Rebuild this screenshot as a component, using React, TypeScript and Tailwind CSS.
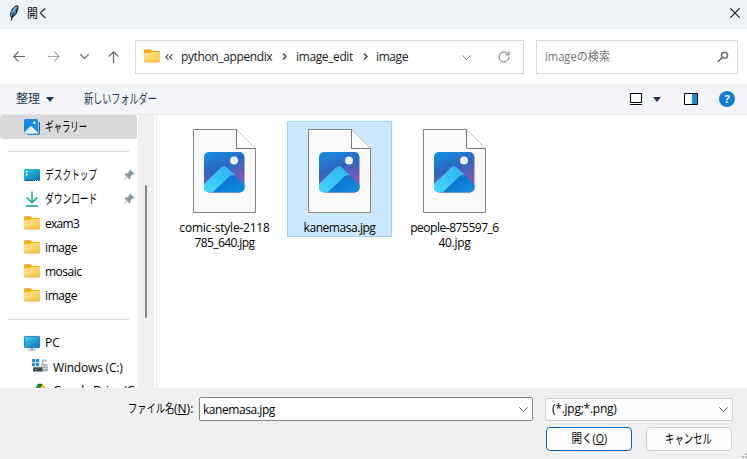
import React, { useId } from "react";

const FONT = "font-['Open_Sans','Noto_Sans_CJK_JP',sans-serif]";

function Folder({ className = "" }: { className?: string }) {
  const id = useId();
  return (
    <svg width="16" height="14" viewBox="0 0 16 14" className={className}>
      <defs>
        <linearGradient id={id} x1="0" y1="0" x2="1" y2="1">
          <stop offset="0" stopColor="#ffe394" />
          <stop offset="1" stopColor="#fcc83f" />
        </linearGradient>
      </defs>
      <path d="M0 1.2Q0 .3.9.3h5.3q.5 0 .9.4L8.500 2H15q1 0 1 1v4H0z" fill="#f2ae10" />
      <path d="M0 4.600Q0 4 .8 4h5.400q.5 0 .9-.4L8 2.900h7.200q.8 0 .8.8v8.400q0 .9-.9.9H.9q-.9 0-.9-.9z" fill={`url(#${id})`} />
      <path d="M.4 12.500q.2.500.6.500h14q.4 0 .6-.5" fill="none" stroke="#dfa11c" strokeWidth=".8" />
    </svg>
  );
}

function Pin() {
  return (
    <svg width="11" height="12" viewBox="0 0 11 12" className="absolute left-[124px] top-[6px]">
      <path d="M6.2.5 10.6 4.8 9.3 5.5 8.7 5.4 6.5 7.6 6.3 9.7 5.5 10.3 3.2 8 .5 10.8 0 10.5 2.6 7.5.5 5.2 1.2 4.4 3.4 4.3 5.7 2.1 5.5 1.2z" fill="#8b97a1" />
    </svg>
  );
}

function Feather() {
  return (
    <svg width="10" height="16" viewBox="0 0 10 16">
      <path d="M8.600.600C5 1 1.600 5 1.400 10.500L2.800 13C6.500 10.500 9.500 6 9 1z" fill="#4b8bc6" stroke="#162230" strokeWidth=".9" />
      <path d="M7.600 1.800C5.300 4 3.500 7 2.900 10" stroke="#a9d3f0" fill="none" />
      <path d="M8.700 1.800 7.200 7.500 3.200 12" stroke="#18222e" fill="none" strokeWidth=".8" />
      <path d="M4.300 7.500 2.300 15.500" stroke="#111" fill="none" />
    </svg>
  );
}

function Gallery() {
  return (
    <svg width="16" height="16" viewBox="0 0 16 16">
      <path d="M14.200 2.500Q16 2.500 16 4v10q0 2-2 2H4q-1.500 0-1.500-1.800z" fill="#0868ae" />
      <rect width="14" height="14.500" rx="1.500" fill="#168bdd" />
      <path d="M14.500 2v12.800H2.500" fill="none" stroke="#d9ebf7" strokeWidth=".7" />
      <path d="M.3 13.600 6.200 7.500q.8-.7 1.600 0l5.900 6.100q-.3.800-1 .8H1.200q-.6 0-.9-.8z" fill="#e7f2fb" />
      <circle cx="10.300" cy="3.700" r="1.300" fill="#fff" />
    </svg>
  );
}

function Desktop() {
  return (
    <svg width="16" height="12" viewBox="0 0 16 12">
      <defs>
        <linearGradient id="desk" x1="0" y1="0" x2="1" y2="1">
          <stop stopColor="#2fd0da" />
          <stop offset="1" stopColor="#086db9" />
        </linearGradient>
      </defs>
      <rect width="16" height="12" rx="1.200" fill="url(#desk)" />
      <path d="M2 2h1.500v1.500H2zM2 5h1.500v1.500H2z" fill="#fff" />
      <path d="M1 11.300h14" stroke="#0b4d90" strokeWidth=".7" />
      <path d="M11 11h1v1h-1zM13 11h1v1h-1z" fill="#bfe6fb" />
    </svg>
  );
}

function Download() {
  return (
    <svg width="14" height="16" viewBox="0 0 14 16" className="ml-px" fill="none" strokeWidth="1.700">
      <defs>
        <linearGradient id="down" gradientUnits="userSpaceOnUse" x1="0" y1="0" x2="0" y2="16">
          <stop stopColor="#34c98a" />
          <stop offset="1" stopColor="#0f9f95" />
        </linearGradient>
      </defs>
      <path d="M7 .5v10.800M1.700 6.300 7 11.500l5.300-5.200M1 15h12" stroke="url(#down)" />
    </svg>
  );
}

function Monitor() {
  return (
    <svg width="16" height="16" viewBox="0 0 16 16">
      <defs>
        <linearGradient id="mon" x1="0" y1="0" x2="1" y2="1">
          <stop stopColor="#42d8e5" />
          <stop offset="1" stopColor="#0b6dbf" />
        </linearGradient>
      </defs>
      <rect x=".4" y="1.400" width="15.200" height="11.200" rx=".8" fill="url(#mon)" stroke="#1a6798" strokeWidth=".8" />
      <path d="M7 13h2v2H7zM4 14.500h8v1H4z" fill="#90a4b2" />
    </svg>
  );
}

function Drive() {
  return (
    <svg width="17" height="14" viewBox="0 0 17 14" className="-mt-[3px]">
      <path d="M0 0h3.200v3.200H0zM4 0h3.200v3.200H4zM0 4h3.200v3.200H0zM4 4h3.200v3.200H4z" fill="#1592e6" />
      <path d="M10.500 6V3q0-2 2-2 1.700 0 2 1.700" fill="none" stroke="#a7b0b8" strokeWidth="1.500" />
      <rect x="9" y="5" width="7" height="7.500" rx="1.500" fill="#a6b1ba" />
      <path d="M9 7h7M9 9.500h7" stroke="#d4dade" />
      <path d="M1.500 8.300H10l.7 4.200H.8z" fill="#3b444b" />
      <path d="M3 10.500h2" stroke="#35e067" strokeWidth="1.200" />
    </svg>
  );
}

function Google() {
  return (
    <svg width="16" height="16" viewBox="0 0 16 16">
      <path d="M6 1.500h3.500L6 12 2 8 5 2.500z" fill="#17903f" />
      <path d="M8.500 1H10q1 0 1.500.8L15 8h-5L7.500 4z" fill="#fbc116" />
      <path d="M5.500 1.500Q6 .8 7 .8h2q1 0 1.500.7L8.500 4.500z" fill="#0c7839" />
      <path d="M4 10h11l-3 4H2z" fill="#3273e8" />
    </svg>
  );
}

function ImageFile() {
  const id = useId();
  return (
    <svg width="63" height="84" viewBox="0 0 63 84">
      <defs>
        <linearGradient id={id + "a"} x1=".25" y1="0" x2=".6" y2="1">
          <stop stopColor="#158cde" />
          <stop offset=".4" stopColor="#2f66bf" />
          <stop offset=".75" stopColor="#7d59b8" />
        </linearGradient>
        <linearGradient id={id + "b"} x1="0" y1="1" x2=".8" y2="0">
          <stop stopColor="#48d8fb" />
          <stop offset="1" stopColor="#2eb4ef" />
        </linearGradient>
        <linearGradient id={id + "c"} x1="0" y1="0" x2="1" y2="1">
          <stop stopColor="#086bc3" />
          <stop offset="1" stopColor="#128ee3" />
        </linearGradient>
        <clipPath id={id + "d"}>
          <rect x="11" y="23" width="40.500" height="40.500" rx="5" />
        </clipPath>
      </defs>
      <path d="M.5.500h43l19 19v64H.5z" fill="#fafafa" stroke="#858585" />
      <path d="M43.500.500v19h19" fill="#fff" stroke="#777" />
      <g clipPath={`url(#${id}d)`}>
        <path d="M11 23h41v41H11z" fill={`url(#${id}a)`} />
        <path d="m17 64 18-16.500q4-3 8 0L52 56v8z" fill={`url(#${id}c)`} />
        <path d="M10 56 27.500 39q3.500-3.300 7 0l7.500 7.300q-3-1-6 1.500L19 64h-9z" fill={`url(#${id}b)`} />
      </g>
      <circle cx="41" cy="31.500" r="4" fill="#edf0f5" />
    </svg>
  );
}

function Chevron({ className = "" }: { className?: string }) {
  return (
    <svg width="9" height="5" viewBox="0 0 9 5" className={className} fill="none" stroke="currentColor">
      <path d="m.4.400 4.100 4L8.600.400" />
    </svg>
  );
}

function Crumb() {
  return (
    <svg width="5" height="7" viewBox="0 0 5 7" fill="none" stroke="#4b4b4b" strokeWidth="1.500">
      <path d="m1 .5 3 3-3 3" />
    </svg>
  );
}

function SideRow({ icon, label, indent = "pl-6", text = "", pinned = false }: {
  icon: React.ReactNode; label: string; indent?: string; text?: string; pinned?: boolean;
}) {
  return (
    <div className={`relative flex h-6 w-[137px] shrink-0 items-center whitespace-nowrap ${indent}`}>
      <span className="flex w-[21px] shrink-0 items-center">{icon}</span>
      <span className={`origin-left ${text}`}>{label}</span>
      {pinned && <Pin />}
    </div>
  );
}

function FileTile({ lines, selected = false }: { lines: { label: string; text: string }[]; selected?: boolean }) {
  return (
    <div className={`flex w-[105px] shrink-0 flex-col items-center border pt-[7px] ${selected ? "h-[116px] border-[#99d1ff] bg-[#cce8ff]" : "h-[132px] border-transparent"}`}>
      <ImageFile />
      <div className="mt-[7px] text-center leading-[15px]">
        {lines.map((l) => (
          <div key={l.label} className={`whitespace-nowrap ${l.text}`}>{l.label}</div>
        ))}
      </div>
    </div>
  );
}

export default function App() {
  return (
    <div className={`flex h-[459px] w-[747px] flex-col overflow-hidden bg-white text-[12px] leading-4 text-[#191919] ${FONT}`}>
      <header className="flex h-[29px] shrink-0 items-center bg-[#eef3f8] pl-[9px] pr-[7px]">
        <div className="-mt-[3px]"><Feather /></div>
        <span className="-mt-[2px] ml-[8px] origin-left scale-x-[0.9] text-black">開く</span>
        <svg width="10" height="10" viewBox="0 0 10 10" className="-mt-[3px] ml-auto" stroke="#181818" strokeWidth="1.100">
          <path d="m.3.300 9.400 9.400M9.700.300.300 9.700" />
        </svg>
      </header>

      <nav className="flex h-[55px] shrink-0 items-center pl-[13px] pr-[9px]">
        <svg width="12" height="11" viewBox="0 0 12 11" fill="none" stroke="#666" strokeWidth="1.200"><path d="M12 5.500H.800M5.500.700.800 5.500l4.700 4.800" /></svg>
        <svg width="12" height="11" viewBox="0 0 12 11" className="ml-[23px]" fill="none" stroke="#a3a3a3" strokeWidth="1.200"><path d="M0 5.500h11.200M6.500.700l4.700 4.800-4.700 4.800" /></svg>
        <Chevron className="ml-[20px] stroke-[1.3] text-[#666]" />
        <svg width="11" height="12" viewBox="0 0 11 12" className="ml-[19px]" fill="none" stroke="#666" strokeWidth="1.200"><path d="M5.500 12V.800M.700 5.500 5.500.800l4.800 4.700" /></svg>
        <div className="ml-[16px] flex h-[34px] w-[389px] items-center whitespace-nowrap border border-[#d9d9d9] pl-2">
          <Folder className="-mt-[2px]" />
          <svg width="8" height="6" viewBox="0 0 8 6" className="ml-[5px]" fill="none" stroke="#555" strokeWidth="1.200"><path d="M3.500.300.800 3l2.700 2.700M7.300.300 4.600 3l2.700 2.700" /></svg>
          <span className="ml-2 w-[101px] tracking-[-0.38px]">python_appendix</span>
          <Crumb />
          <span className="ml-[9px] w-[67px] tracking-[-0.38px]">image_edit</span>
          <Crumb />
          <span className="ml-[8px] tracking-[-0.4px]">image</span>
          <Chevron className="ml-auto mt-[2px] text-[#777]" />
          <svg width="12" height="12" viewBox="0 0 12 12" className="ml-[27px] mr-[13px] mt-[1px]" fill="none" stroke="#777">
            <path d="M11 5.500A5 5 0 1 1 9.300 2.200L11 3.800M11 .5v3.300H7.500" />
          </svg>
        </div>
        <div className="ml-3 flex h-[34px] w-[202px] items-center justify-between border border-[#d9d9d9] pl-2 pr-2 text-[#727272]">
          <span className="origin-left scale-x-[0.93]">imageの検索</span>
          <svg width="12" height="12" viewBox="0 0 12 12" fill="none" stroke="#707070" strokeWidth="1.600">
            <circle cx="7.500" cy="4.200" r="3" /><path d="M5.200 6.500.800 11" />
          </svg>
        </div>
      </nav>

      <div className="flex h-[31px] shrink-0 items-center border-b border-[#e5e7e9] bg-[#f4f5f8] pl-4 pr-3 text-[#1e395b]">
        <span className="w-[30px]">整理</span>
        <svg width="8" height="5" viewBox="0 0 8 5" fill="currentColor"><path d="M0 0h8L4 5z" /></svg>
        <span className="mb-px ml-[30px] origin-left scale-x-[0.7] whitespace-nowrap pb-px text-[13px]">新しいフォルダー</span>
        <div className="ml-auto flex items-center">
          <svg width="12" height="12" viewBox="0 0 12 12" fill="white" stroke="#000"><path d="M.5.500h11v9H.5zM0 11.500h12" /></svg>
          <svg width="8" height="5" viewBox="0 0 8 5" className="ml-[11px]" fill="currentColor"><path d="M0 0h8L4 5z" /></svg>
          <svg width="14" height="12" viewBox="0 0 14 12" className="ml-[23px]"><path d="M.5.500h13v11H.5z" fill="white" stroke="#000" /><path d="M8 1h5v10H8z" fill="#158ce0" /></svg>
          <span className="ml-[21px] flex h-4 w-4 items-center justify-center rounded-full bg-[#117ed3] text-[11px] font-bold text-white">?</span>
        </div>
      </div>

      <main className="flex h-[273px] shrink-0 text-black">
        <aside className="flex w-[138px] shrink-0 flex-col overflow-hidden">
          <div className="w-[137px] rounded-[3px] bg-[#d9d9d9]"><SideRow icon={<Gallery />} label="ギャラリー" text="pb-[2px] scale-x-[0.65] text-[13px]" /></div>
          <div className="mb-[11px] ml-2 mt-3 h-px w-[121px] shrink-0 bg-[#d5d5d5]" />
          <SideRow icon={<Desktop />} label="デスクトップ" text="pb-[2px] scale-x-[0.67] text-[13px]" pinned />
          <SideRow icon={<Download />} label="ダウンロード" text="pb-[2px] scale-x-[0.67] text-[13px]" pinned />
          <SideRow icon={<Folder />} label="exam3" text="pt-px tracking-[-0.7px]" />
          <SideRow icon={<Folder />} label="image" text="pt-px tracking-[-0.4px]" />
          <SideRow icon={<Folder />} label="mosaic" text="pt-px tracking-[-0.5px]" />
          <SideRow icon={<Folder />} label="image" text="pt-px tracking-[-0.4px]" />
          <div className="mb-[11px] ml-2 mt-3 h-px w-[121px] shrink-0 bg-[#d5d5d5]" />
          <SideRow icon={<Monitor />} label="PC" />
          <SideRow icon={<Drive />} label="Windows (C:)" indent="pl-8" text="pt-px tracking-[-0.2px]" />
          <SideRow icon={<Google />} label="Google Drive (G:)" indent="pl-8" text="tracking-[-0.35px]" />
        </aside>
        <div className="w-4 shrink-0 bg-[#f0f0f0] pl-[7px] pt-[70px]"><div className="h-[133px] w-[2px] rounded bg-[#858585]" /></div>
        <div className="ml-[2px] flex min-w-0 flex-1 items-start border-l border-[#eee] pl-[15px] pt-[6px]">
          <FileTile lines={[{ label: "comic-style-2118", text: "tracking-[-0.22px]" }, { label: "785_640.jpg", text: "tracking-[-0.6px]" }]} />
          <div className="ml-[10px]"><FileTile selected lines={[{ label: "kanemasa.jpg", text: "tracking-[-0.45px]" }]} /></div>
          <div className="ml-[10px]"><FileTile lines={[{ label: "people-875597_6", text: "tracking-[-0.47px]" }, { label: "40.jpg", text: "tracking-[-0.3px]" }]} /></div>
        </div>
      </main>

      <footer className="relative h-[71px] shrink-0 bg-[#f0f0f0] pt-[9px] text-black">
        <div className="flex h-6 items-center pl-[128px]">
          <span className="w-[71px] whitespace-nowrap"><span className="inline-block w-[46px] origin-left scale-x-[0.77]">ファイル名</span>(<u>N</u>):</span>
          <div className="flex h-6 w-[334px] shrink-0 items-center justify-between rounded-[2px] border border-[#858585] bg-white pl-[3px] pr-[4px]">
            <span className="pt-[2px] tracking-[-0.45px]">kanemasa.jpg</span><Chevron className="text-[#555]" />
          </div>
          <div className="ml-3 flex h-[23px] w-[188px] shrink-0 items-center justify-between rounded-[2px] border border-[#d0d0d0] bg-[#fdfdfd] pl-[6px] pr-[4px]">
            <span className="tracking-[-0.25px]">(*.jpg;*.png)</span><Chevron className="text-[#555]" />
          </div>
        </div>
        <div className="mt-[6px] flex pl-[546px]">
          <button className="flex h-6 w-[86px] items-center justify-center rounded-[4px] border border-[#0067c0] bg-[#fdfdfd]"><span className="scale-x-[0.88] whitespace-nowrap">開く(<u>O</u>)</span></button>
          <button className="ml-[14px] flex h-6 w-[86px] items-center justify-center rounded-[4px] border border-[#d0d0d0] bg-[#fdfdfd]"><span className="scale-x-[0.72] whitespace-nowrap pb-[2px] text-[13px]">キャンセル</span></button>
        </div>
        <svg width="6" height="6" viewBox="0 0 6 6" className="absolute bottom-0 right-0" fill="#b8b8b8"><path d="M4 0h2v2H4zM4 3h2v2H4zM1 3h2v2H1z" /></svg>
      </footer>
    </div>
  );
}
